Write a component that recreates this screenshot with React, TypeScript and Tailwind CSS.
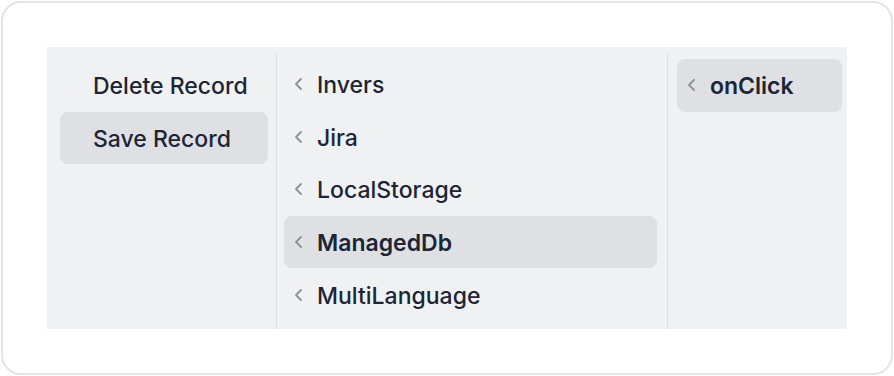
import React from "react";

const Chevron = () => (
  <svg width="11" height="16" viewBox="0 0 11 16" fill="none" className="shrink-0">
    <path d="M8 3 3 8l5 5" stroke="#8b9099" strokeWidth="1.8" strokeLinecap="round" strokeLinejoin="round" />
  </svg>
);

type Item = { label: string; active?: boolean };

const actions: Item[] = [{ label: "Delete Record" }, { label: "Save Record", active: true }];

const modules: Item[] = [
  { label: "Invers" },
  { label: "Jira" },
  { label: "LocalStorage" },
  { label: "ManagedDb", active: true },
  { label: "MultiLanguage" },
];

const events: Item[] = [{ label: "onClick", active: true }];

const Row = ({ item, chevron }: { item: Item; chevron?: boolean }) => (
  <div
    className={`flex h-[52.6px] items-center rounded-lg ${chevron ? "gap-[13px] pl-[9px]" : "pl-[33px]"} ${
      item.active ? "bg-[#dfe0e4]" : ""
    }`}
  >
    {chevron && <Chevron />}
    <span className={`pt-[3px] text-[23px] leading-none text-[#1c2536] ${item.active && chevron ? "font-semibold" : "font-medium"}`}>
      {item.label}
    </span>
  </div>
);

const Divider = () => <div className="mt-[6px] w-px shrink-0 self-stretch bg-[#dcdee1]" />;

export default function App() {
  return (
    <div className="h-[376px] w-[894px] bg-white p-px" style={{ fontFamily: "Inter, 'Noto Sans', sans-serif" }}>
      <div className="h-full w-full rounded-[20px] border-2 border-[#e2e4e7] pl-[44px] pt-[44px]">
        <div className="flex h-[282px] w-[800px] bg-[#f0f1f3]">
          <div className="flex w-[229px] shrink-0 flex-col pl-[13px] pr-[8px] pt-[12px]">
            {actions.map((a) => (
              <Row key={a.label} item={a} />
            ))}
          </div>
          <Divider />
          <div className="flex w-[390px] shrink-0 flex-col pl-[7px] pr-[10px] pt-[11px]">
            {modules.map((m) => (
              <Row key={m.label} item={m} chevron />
            ))}
          </div>
          <Divider />
          <div className="flex flex-1 flex-col pl-[9px] pr-[5px] pt-[12px]">
            {events.map((e) => (
              <Row key={e.label} item={e} chevron />
            ))}
          </div>
        </div>
      </div>
    </div>
  );
}
